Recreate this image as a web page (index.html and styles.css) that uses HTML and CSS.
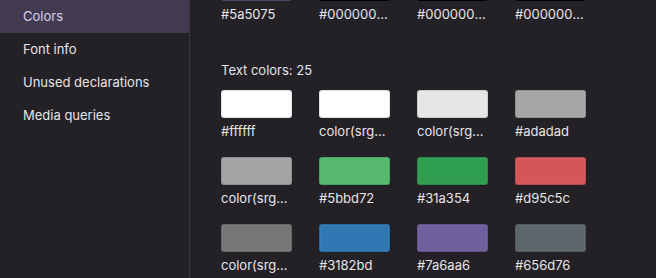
FILE: index.html
```html
<!DOCTYPE html>
<html>
<head>
<meta charset="utf-8">
<link rel="stylesheet" href="styles.css">
</head>
<body>
<div class="app">
  <nav class="sidebar">
    <div class="nav-item active">Colors</div>
    <div class="nav-item">Font info</div>
    <div class="nav-item">Unused declarations</div>
    <div class="nav-item">Media queries</div>
  </nav>
  <main class="main">
    <div class="content">
      <section class="section first">
        <div class="grid">
          <div class="item"><div class="swatch" style="background:#5a5075"></div><div class="label">#5a5075</div></div>
          <div class="item"><div class="swatch" style="background:#000000"></div><div class="label">#00000080</div></div>
          <div class="item"><div class="swatch" style="background:#000000"></div><div class="label">#00000066</div></div>
          <div class="item"><div class="swatch" style="background:#000000"></div><div class="label">#00000033</div></div>
        </div>
      </section>
      <section class="section">
        <h2 class="heading">Text colors: 25</h2>
        <div class="grid">
          <div class="item"><div class="swatch" style="background:#ffffff"></div><div class="label">#ffffff</div></div>
          <div class="item"><div class="swatch" style="background:#ffffff"></div><div class="label">color(srgb 1 1 1)</div></div>
          <div class="item"><div class="swatch" style="background:#e6e6e6"></div><div class="label">color(srgb 0.9 0.9 0.9)</div></div>
          <div class="item"><div class="swatch" style="background:#a6a6a6"></div><div class="label">#adadad</div></div>
          <div class="item"><div class="swatch" style="background:#a3a3a3"></div><div class="label">color(srgb 0.64 0.64 0.64)</div></div>
          <div class="item"><div class="swatch" style="background:#56b86d"></div><div class="label">#5bbd72</div></div>
          <div class="item"><div class="swatch" style="background:#2f9d50"></div><div class="label">#31a354</div></div>
          <div class="item"><div class="swatch" style="background:#d45658"></div><div class="label">#d95c5c</div></div>
          <div class="item"><div class="swatch" style="background:#767676"></div><div class="label">color(srgb 0.47 0.47 0.47)</div></div>
          <div class="item"><div class="swatch" style="background:#3078b4"></div><div class="label">#3182bd</div></div>
          <div class="item"><div class="swatch" style="background:#6f5f9d"></div><div class="label">#7a6aa6</div></div>
          <div class="item"><div class="swatch" style="background:#5e656c"></div><div class="label">#656d76</div></div>
        </div>
      </section>
    </div>
  </main>
</div>
</body>
</html>
```
FILE: styles.css
```css
* { box-sizing: border-box; }
html, body {
  margin: 0;
  padding: 0;
  height: 100%;
  background: #232125;
  overflow: hidden;
}
body {
  font-family: Inter, "Noto Sans", "Liberation Sans", sans-serif;
  font-size: 13px;
  color: #e4e1e6;
  -webkit-font-smoothing: antialiased;
}
.app {
  display: flex;
  height: 278px;
}
.sidebar {
  width: 190px;
  flex: 0 0 190px;
  border-right: 1px solid #3a3640;
  background: #232125;
}
.nav-item {
  height: 33px;
  line-height: 33px;
  padding-left: 23px;
  color: #e6e3e8;
  white-space: nowrap;
}
.nav-item.active {
  background: #433b4f;
  color: #dccfee;
}
.main {
  flex: 1;
  overflow: hidden;
  padding-left: 31px;
}
.content {
  margin-top: -27px;
}
.section.first {
  margin-bottom: 40px;
}
.heading {
  margin: 0 0 12px 0;
  font-size: 13px;
  font-weight: 400;
  line-height: 16px;
  color: #e6e3e8;
}
.grid {
  display: grid;
  grid-template-columns: repeat(4, 71px);
  column-gap: 27px;
  row-gap: 18px;
}
.item {
  width: 71px;
}
.swatch {
  height: 28px;
  border-radius: 3px;
  border: 1px solid rgba(0, 0, 0, 0.12);
  box-shadow: inset 0 0 0 1px rgba(255,255,255,0.04);
}
.label {
  margin-top: 5px;
  line-height: 16px;
  white-space: nowrap;
  overflow: hidden;
  text-overflow: ellipsis;
  color: #e8e5ea;
}
```
